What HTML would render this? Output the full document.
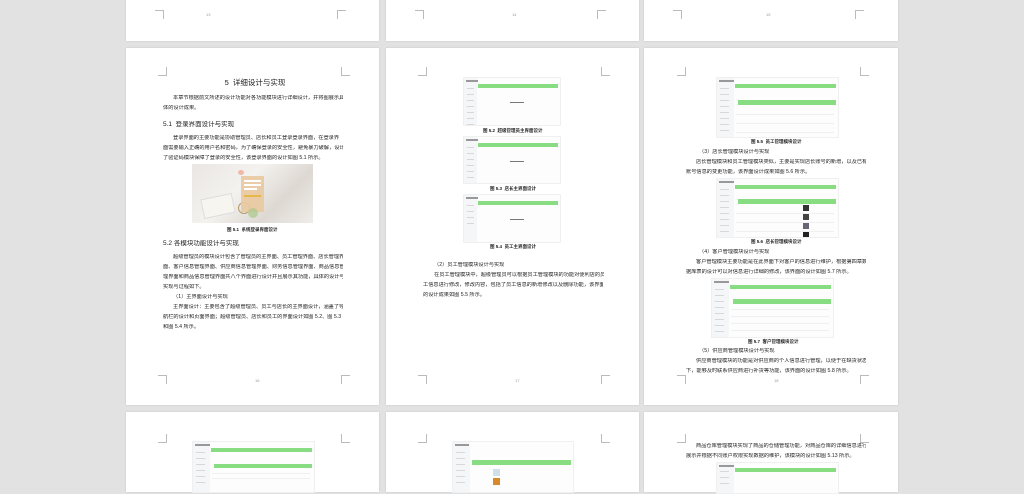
<!DOCTYPE html>
<html><head><meta charset="utf-8"><style>
body{margin:0;width:1024px;height:483px;background:#e2e2e2;position:relative;overflow:hidden;font-family:"Liberation Sans","Noto Sans CJK SC",sans-serif;color:#333}
.pg{position:absolute;background:#fff;box-shadow:0 0 2px rgba(0,0,0,.12)}
.t{position:absolute;font-size:5.2px;line-height:6px;white-space:nowrap;overflow:hidden;color:#222}
.cm{position:absolute;width:8px;height:8px;border-color:#bbb;border-style:solid;border-width:0}
.num{position:absolute;font-size:4px;color:#999}
.cap{position:absolute;font-size:4.5px;font-weight:bold;white-space:nowrap;color:#222}
.shot{position:absolute;background:#fdfdfd;border:1px solid #f0f0f0;overflow:hidden}
.shot .sb{position:absolute;left:0;top:0;bottom:0;width:14%;background:#f5f6f7}
.shot .sb i{display:block;height:1px;width:55%;background:#d8d8d8;margin:0 0 5px 3px}
.shot .gb{position:absolute;left:15%;right:2%;height:4px;background:#88dc82}
.shot .row{position:absolute;left:16%;right:3%;height:1px;background:#f0f0f0}
.shot .logo{position:absolute;left:2px;top:2px;width:12%;height:2px;background:#999}
</style></head><body>

<div class="pg" style="left:126px;top:-10px;width:253px;height:51px"></div>
<div class="pg" style="left:386px;top:-10px;width:253px;height:51px"></div>
<div class="pg" style="left:644px;top:-10px;width:254px;height:51px"></div>
<div class="cm" style="left:155px;top:10px;border-top-width:1px;border-right-width:1px"></div>
<div class="cm" style="left:337px;top:10px;border-top-width:1px;border-left-width:1px"></div>
<div class="num" style="left:206px;top:12px">13</div>
<div class="cm" style="left:415px;top:10px;border-top-width:1px;border-right-width:1px"></div>
<div class="cm" style="left:597px;top:10px;border-top-width:1px;border-left-width:1px"></div>
<div class="num" style="left:512px;top:12px">14</div>
<div class="cm" style="left:673px;top:10px;border-top-width:1px;border-right-width:1px"></div>
<div class="cm" style="left:855px;top:10px;border-top-width:1px;border-left-width:1px"></div>
<div class="num" style="left:766px;top:12px">15</div>

<div class="pg" style="left:126px;top:48px;width:253px;height:357px"></div>
<div class="pg" style="left:386px;top:48px;width:253px;height:357px"></div>
<div class="pg" style="left:644px;top:48px;width:254px;height:357px"></div>

<div class="cm" style="left:158px;top:67px;border-bottom-width:1px;border-right-width:1px"></div>
<div class="cm" style="left:341px;top:67px;border-bottom-width:1px;border-left-width:1px"></div>
<div class="cm" style="left:158px;top:375px;border-top-width:1px;border-right-width:1px"></div>
<div class="cm" style="left:341px;top:375px;border-top-width:1px;border-left-width:1px"></div>
<div class="num" style="left:255px;top:378px">16</div>
<div class="cm" style="left:418px;top:67px;border-bottom-width:1px;border-right-width:1px"></div>
<div class="cm" style="left:601px;top:67px;border-bottom-width:1px;border-left-width:1px"></div>
<div class="cm" style="left:418px;top:375px;border-top-width:1px;border-right-width:1px"></div>
<div class="cm" style="left:601px;top:375px;border-top-width:1px;border-left-width:1px"></div>
<div class="num" style="left:515px;top:378px">17</div>
<div class="cm" style="left:677px;top:67px;border-bottom-width:1px;border-right-width:1px"></div>
<div class="cm" style="left:860px;top:67px;border-bottom-width:1px;border-left-width:1px"></div>
<div class="cm" style="left:677px;top:375px;border-top-width:1px;border-right-width:1px"></div>
<div class="cm" style="left:860px;top:375px;border-top-width:1px;border-left-width:1px"></div>
<div class="num" style="left:774px;top:378px">18</div>

<div class="t" style="left:160px;top:78px;width:190px;text-align:center;font-size:7.5px;line-height:9px;color:#222">5&nbsp;&nbsp;详细设计与实现</div>
<div class="t" style="left:173px;top:95px;width:170px">本章节根据前文所述的设计功能对各功能模块进行详细设计，并将图展示具</div>
<div class="t" style="left:163px;top:105px;width:180px">体的设计成果。</div>
<div class="t" style="left:163px;top:121px;font-size:6.5px;line-height:8px;color:#222">5.1&nbsp;&nbsp;登录界面设计与实现</div>
<div class="t" style="left:173px;top:135px;width:170px">登录界面的主要功能是协助管理员、店长和员工登录登录界面，在登录界</div>
<div class="t" style="left:163px;top:145px;width:180px">面需要输入正确的用户名和密码，为了确保登录的安全性，避免暴力破解，设计</div>
<div class="t" style="left:163px;top:155px;width:180px">了验证码模块保障了登录的安全性，该登录界面的设计如图 5.1 所示。</div>
<div style="position:absolute;left:192px;top:164px;width:121px;height:59px;background:linear-gradient(135deg,#e9e6e3,#f4f2ef 40%,#ddd8d2 70%,#efedea)"></div>
<div style="position:absolute;left:202px;top:196px;width:30px;height:18px;background:#f7f5f0;transform:rotate(-12deg);border:1px solid #ddd"></div>
<div style="position:absolute;left:238px;top:202px;width:10px;height:10px;border:1px solid #b59a6a;border-radius:50%"></div>
<div style="position:absolute;left:241px;top:176px;width:23px;height:36px;background:#e9c9a0;opacity:.9"></div>
<div style="position:absolute;left:244px;top:180px;width:17px;height:2px;background:#fff"></div>
<div style="position:absolute;left:244px;top:184px;width:17px;height:2px;background:#fff"></div>
<div style="position:absolute;left:244px;top:188px;width:13px;height:2px;background:#fff"></div>
<div style="position:absolute;left:244px;top:195px;width:17px;height:2px;background:#e6b84a"></div>
<div style="position:absolute;left:238px;top:170px;width:6px;height:5px;border-radius:50%;background:#f0b9a6"></div>
<div style="position:absolute;left:248px;top:208px;width:10px;height:10px;background:#a8c78a;border-radius:50%;opacity:.7"></div>
<div class="cap" style="left:227px;top:227px">图 5.1&nbsp;&nbsp;系统登录界面设计</div>
<div class="t" style="left:163px;top:240px;font-size:6.5px;line-height:8px;color:#222">5.2 各模块功能设计与实现</div>
<div class="t" style="left:173px;top:254px;width:170px">超级管理员的模块设计包含了管理员的主界面、员工管理界面、店长管理界</div>
<div class="t" style="left:163px;top:264px;width:180px">面、客户信息管理界面、供应商信息管理界面、财务信息管理界面、商品信息管</div>
<div class="t" style="left:163px;top:274px;width:180px">理界面和商品信息管理界面共八个界面进行设计并且展示其功能，具体的设计与</div>
<div class="t" style="left:163px;top:284px;width:180px">实现与过程如下。</div>
<div class="t" style="left:173px;top:294px;width:170px">（1）主界面设计与实现</div>
<div class="t" style="left:173px;top:304px;width:170px">主界面设计：主要包含了超级管理员、员工与店长的主界面设计，涵盖了导</div>
<div class="t" style="left:163px;top:314px;width:180px">航栏的设计和页面界面；超级管理员、店长和员工的界面设计如图 5.2、图 5.3</div>
<div class="t" style="left:163px;top:324px;width:180px">和图 5.4 所示。</div>

<div class="shot" style="left:463px;top:77px;width:96px;height:47px"><div class="sb"><i style="margin-top:10px"></i><i></i><i></i><i></i><i></i><i></i><i></i></div><div class="logo"></div><div class="gb" style="top:6px"></div><div style="position:absolute;left:48%;top:24px;width:14px;height:1px;background:#777"></div></div>
<div class="cap" style="left:483px;top:128px">图 5.2&nbsp;&nbsp;超级管理员主界面设计</div>
<div class="shot" style="left:463px;top:136px;width:96px;height:46px"><div class="sb"><i style="margin-top:10px"></i><i></i><i></i><i></i><i></i><i></i><i></i></div><div class="logo"></div><div class="gb" style="top:6px"></div><div style="position:absolute;left:48%;top:24px;width:14px;height:1px;background:#777"></div></div>
<div class="cap" style="left:490px;top:186px">图 5.3&nbsp;&nbsp;店长主界面设计</div>
<div class="shot" style="left:463px;top:194px;width:96px;height:47px"><div class="sb"><i style="margin-top:10px"></i><i></i><i></i><i></i></div><div class="logo"></div><div class="gb" style="top:6px"></div><div style="position:absolute;left:48%;top:24px;width:14px;height:1px;background:#777"></div></div>
<div class="cap" style="left:490px;top:244px">图 5.4&nbsp;&nbsp;员工主界面设计</div>
<div class="t" style="left:434px;top:262px;width:170px">（2）员工管理模块设计与实现</div>
<div class="t" style="left:434px;top:272px;width:170px">在员工管理模块中，超级管理员可以根据员工管理模块的功能对便利店的员</div>
<div class="t" style="left:423px;top:282px;width:180px">工信息进行修改，修改内容，包括了员工信息的新增修改以及删除功能，该界面</div>
<div class="t" style="left:423px;top:292px;width:180px">的设计成果如图 5.5 所示。</div>

<div class="shot" style="left:716px;top:77px;width:121px;height:59px"><div class="sb"><i style="margin-top:10px"></i><i></i><i></i><i></i><i></i><i></i><i></i><i></i></div><div class="logo"></div><div class="gb" style="top:6px"></div><div class="gb" style="top:22px;left:17%;height:5px"></div><div class="row" style="top:36px"></div><div class="row" style="top:45px"></div><div class="row" style="top:54px"></div></div>
<div class="cap" style="left:751px;top:139px">图 5.5&nbsp;&nbsp;员工管理模块设计</div>
<div class="t" style="left:699px;top:149px;width:170px">（3）店长管理模块设计与实现</div>
<div class="t" style="left:696px;top:159px;width:170px">店长管理模块和员工管理模块类似，主要是实现店长账号的新增，以及已有</div>
<div class="t" style="left:686px;top:169px;width:180px">账号信息的变更功能，该界面设计成果如图 5.6 所示。</div>
<div class="shot" style="left:716px;top:178px;width:121px;height:58px"><div class="sb"><i style="margin-top:10px"></i><i></i><i></i><i></i><i></i><i></i><i></i><i></i></div><div class="logo"></div><div class="gb" style="top:6px"></div><div class="gb" style="top:20px;left:17%;height:5px"></div><div class="row" style="top:34px"></div><div class="row" style="top:43px"></div><div class="row" style="top:52px"></div><div style="position:absolute;left:86px;top:26px;width:6px;height:6px;background:#333"></div><div style="position:absolute;left:86px;top:35px;width:6px;height:6px;background:#444"></div><div style="position:absolute;left:86px;top:44px;width:6px;height:6px;background:#667"></div><div style="position:absolute;left:86px;top:53px;width:6px;height:5px;background:#222"></div></div>
<div class="cap" style="left:751px;top:239px">图 5.6&nbsp;&nbsp;店长管理模块设计</div>
<div class="t" style="left:699px;top:249px;width:170px">（4）客户管理模块设计与实现</div>
<div class="t" style="left:696px;top:259px;width:170px">客户管理模块主要功能是在此界面下对客户的信息进行维护，根据第四章数</div>
<div class="t" style="left:686px;top:269px;width:180px">据库表的设计可以对信息进行详细的修改，该界面的设计如图 5.7 所示。</div>
<div class="shot" style="left:711px;top:278px;width:121px;height:58px"><div class="sb"><i style="margin-top:10px"></i><i></i><i></i><i></i><i></i><i></i><i></i><i></i></div><div class="logo"></div><div class="gb" style="top:6px"></div><div class="gb" style="top:20px;left:17%;height:5px"></div><div class="row" style="top:30px"></div><div class="row" style="top:37px"></div><div class="row" style="top:44px"></div><div class="row" style="top:51px"></div></div>
<div class="cap" style="left:748px;top:339px">图 5.7&nbsp;&nbsp;客户管理模块设计</div>
<div class="t" style="left:699px;top:348px;width:170px">（5）供应商管理模块设计与实现</div>
<div class="t" style="left:696px;top:358px;width:170px">供应商管理模块的功能是对供应商的个人信息进行管理，以便于在缺货状态</div>
<div class="t" style="left:686px;top:368px;width:180px">下，能够及时联系供应商进行补货等功能，该界面的设计如图 5.8 所示。</div>

<div class="pg" style="left:126px;top:412px;width:253px;height:80px"></div>
<div class="pg" style="left:386px;top:412px;width:253px;height:80px"></div>
<div class="pg" style="left:644px;top:412px;width:254px;height:80px"></div>
<div class="cm" style="left:158px;top:434px;border-bottom-width:1px;border-right-width:1px"></div>
<div class="cm" style="left:341px;top:434px;border-bottom-width:1px;border-left-width:1px"></div>
<div class="cm" style="left:418px;top:434px;border-bottom-width:1px;border-right-width:1px"></div>
<div class="cm" style="left:601px;top:434px;border-bottom-width:1px;border-left-width:1px"></div>
<div class="cm" style="left:677px;top:434px;border-bottom-width:1px;border-right-width:1px"></div>
<div class="cm" style="left:860px;top:434px;border-bottom-width:1px;border-left-width:1px"></div>
<div class="shot" style="left:192px;top:441px;width:121px;height:50px"><div class="sb"><i style="margin-top:10px"></i><i></i><i></i><i></i><i></i><i></i></div><div class="logo"></div><div class="gb" style="top:6px"></div><div class="gb" style="top:22px;left:17%;height:4px"></div><div class="row" style="top:31px"></div><div class="row" style="top:36px"></div></div>
<div class="shot" style="left:452px;top:441px;width:120px;height:50px"><div class="sb"><i style="margin-top:10px"></i><i></i><i></i><i></i><i></i><i></i></div><div class="logo"></div><div class="gb" style="top:18px;height:5px;left:16%"></div><div style="position:absolute;left:40px;top:27px;width:7px;height:7px;background:#cfe0ea"></div><div style="position:absolute;left:40px;top:36px;width:7px;height:7px;background:#d88a2a"></div></div>
<div class="t" style="left:696px;top:443px;width:170px">商品仓库管理模块实现了商品的仓储管理功能，对商品仓库的详细信息进行</div>
<div class="t" style="left:686px;top:453px;width:180px">展示并根据不同账户权限实现数据的维护，该模块的设计如图 5.13 所示。</div>
<div class="shot" style="left:716px;top:462px;width:121px;height:30px"><div class="sb"><i style="margin-top:8px"></i><i></i><i></i></div><div class="logo"></div><div class="gb" style="top:5px"></div></div>
</body></html>
